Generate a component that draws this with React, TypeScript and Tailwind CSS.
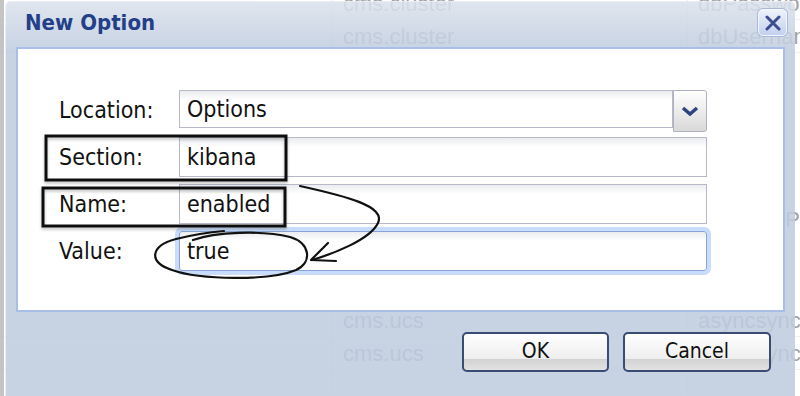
import React from "react";

// background table that shows through the translucent dialog frame
function BackgroundRow({
  h,
  a,
  b,
}: {
  h: string;
  a: string;
  b: string;
}) {
  return (
    <div className={`flex ${h} border-b border-[#f0f0f0]`}>
      <div className="w-[332px] shrink-0 border-r border-[#ececec]" />
      <div className="w-[356px] shrink-0 border-r border-[#ececec] flex items-center pl-[11px] text-[22px] text-[#a2a2a2] font-['Liberation_Sans',Arial,sans-serif]">
        {a}
      </div>
      <div className="flex-1 flex items-center pl-[10px] text-[22px] text-[#a2a2a2] font-['Liberation_Sans',Arial,sans-serif] whitespace-nowrap">
        {b}
      </div>
    </div>
  );
}

function Background() {
  return (
    <div className="flex flex-col -mt-[13px] w-[800px]">
      <BackgroundRow h="h-[33px]" a="cms.cluster" b="dbPassword" />
      <BackgroundRow h="h-[33px]" a="cms.cluster" b="dbUsername" />
      <div className="h-[251px] flex">
        <div className="w-[688px]" />
        <div className="flex-1 flex flex-col pl-[94px] pt-[150px] text-[22px] text-[#a2a2a2] font-['Liberation_Sans',Arial,sans-serif]">
          IP
        </div>
      </div>
      <BackgroundRow h="h-[33px]" a="cms.ucs" b="asyncsync" />
      <BackgroundRow h="h-[33px]" a="cms.ucs" b="asyncsync" />
      <BackgroundRow h="h-[33px]" a="" b="" />
    </div>
  );
}

function TextInput({ value }: { value: string }) {
  return (
    <div className="w-[528px] h-full border border-[#b6b9c9] bg-[linear-gradient(to_bottom,#eaecef,#ffffff_9px)] flex items-center pl-[7px] text-[23px] text-[#111]">
      {value}
    </div>
  );
}

function Row({ label, children }: { label: string; children: React.ReactNode }) {
  return (
    <div className="flex items-center h-[40px]">
      <div className="w-[120px] text-[23px] text-[#111]">{label}</div>
      {children}
    </div>
  );
}

export default function App() {
  return (
    <div className="relative w-[800px] h-[396px] overflow-hidden bg-white font-['DejaVu_Sans_Condensed','DejaVu_Sans',sans-serif]">
      <div className="absolute left-0 top-0 w-[4px] h-full bg-[#c4c4c4]" />
      <Background />

      {/* dialog */}
      <div className="absolute left-[5px] top-[1px] w-[790px] h-[430px] rounded-t-[5px] border-l border-t border-white/60 bg-[linear-gradient(to_bottom,rgba(219,226,236,0.87),rgba(191,204,223,0.87)_48px)] flex flex-col">
        <div className="h-[45px] flex items-start justify-between pl-[19px] pr-[8px]">
          <div className="mt-[4px] text-[22px] font-bold text-[#223f88]">
            New Option
          </div>
          <button className="mt-[7px] w-[29px] h-[27px] rounded-[5px] border border-[#f4f7fd] shadow-[0_0_0_1px_#a9b8d6] bg-[linear-gradient(to_bottom,#edf2fb,#c3d1ee)] flex items-center justify-center">
            <svg width="16" height="16" viewBox="0 0 16 16">
              <path
                d="M2 2 L14 14 M14 2 L2 14"
                stroke="#3c4d8f"
                strokeWidth="3"
                strokeLinecap="round"
              />
            </svg>
          </button>
        </div>

        {/* form panel */}
        <div className="mx-[10px] h-[265px] bg-white border-2 border-[#a9bee9] pt-[41px] pl-[41px] flex flex-col gap-[7px]">
          <Row label="Location:">
            <div className="flex h-full">
              <div className="w-[494px] h-[38px] border border-[#b6b9c9] bg-[linear-gradient(to_bottom,#eaecef,#ffffff_9px)] flex items-center pl-[7px] text-[23px] text-[#111]">
                Options
              </div>
              <div className="w-[34px] h-[42px] border border-[#aeb1bf] rounded-r-[3px] bg-[linear-gradient(to_bottom,#ffffff,#d9d9d9)] flex items-center justify-center">
                <svg width="20" height="10" viewBox="0 0 20 10">
                  <path
                    d="M3 2 L10 8 L17 2"
                    stroke="#2e4481"
                    strokeWidth="3.5"
                    fill="none"
                  />
                </svg>
              </div>
            </div>
          </Row>
          <Row label="Section:">
            <TextInput value="kibana" />
          </Row>
          <Row label="Name:">
            <TextInput value="enabled" />
          </Row>
          <Row label="Value:">
            <div className="w-[528px] h-full rounded-[3px] border border-[#86a5d6] shadow-[0_0_0_4px_#c9dcf9] bg-[linear-gradient(to_bottom,#eaecef,#ffffff_9px)] flex items-center pl-[7px] text-[23px] text-[#111]">
              true
            </div>
          </Row>
        </div>

        {/* buttons */}
        <div className="flex justify-end gap-[14px] pr-[24px] mt-[20px]">
          <button className="w-[147px] h-[40px] rounded-[5px] border-2 border-[#3a4c74] bg-[linear-gradient(to_bottom,#ffffff,#eeeeee_68%,#d3d3d3_70%,#e2e2e2)] text-[21px] text-[#111]">
            OK
          </button>
          <button className="w-[148px] h-[40px] rounded-[5px] border-2 border-[#3a4c74] bg-[linear-gradient(to_bottom,#ffffff,#eeeeee_68%,#d3d3d3_70%,#e2e2e2)] text-[21px] text-[#111]">
            Cancel
          </button>
        </div>
      </div>

      {/* hand drawn annotations */}
      <svg
        className="absolute inset-0 pointer-events-none"
        width="800"
        height="396"
        viewBox="0 0 800 396"
      >
        <defs>
          <filter id="sh" x="-10%" y="-10%" width="120%" height="130%">
            <feDropShadow dx="0" dy="2" stdDeviation="1.5" floodColor="#000" floodOpacity="0.25" />
          </filter>
        </defs>
        <g fill="none" stroke="#111" strokeWidth="3" filter="url(#sh)">
          <rect x="46" y="136" width="240" height="44" />
          <rect x="43" y="188" width="242" height="38" />
        </g>
        <g fill="none" stroke="#111" strokeWidth="2.2" strokeLinecap="round" strokeLinejoin="round">
          <path d="M193 240 C215 232 262 230 290 237 C310 243 313 262 296 270 C270 281 200 280 172 270 C148 262 150 246 176 239 C196 234 212 232 224 231" />
          <path d="M300 186 C345 196 386 206 378 223 C370 240 332 254 312 260" />
          <path d="M328 243 L311 260 L336 261" />
        </g>
      </svg>
    </div>
  );
}
